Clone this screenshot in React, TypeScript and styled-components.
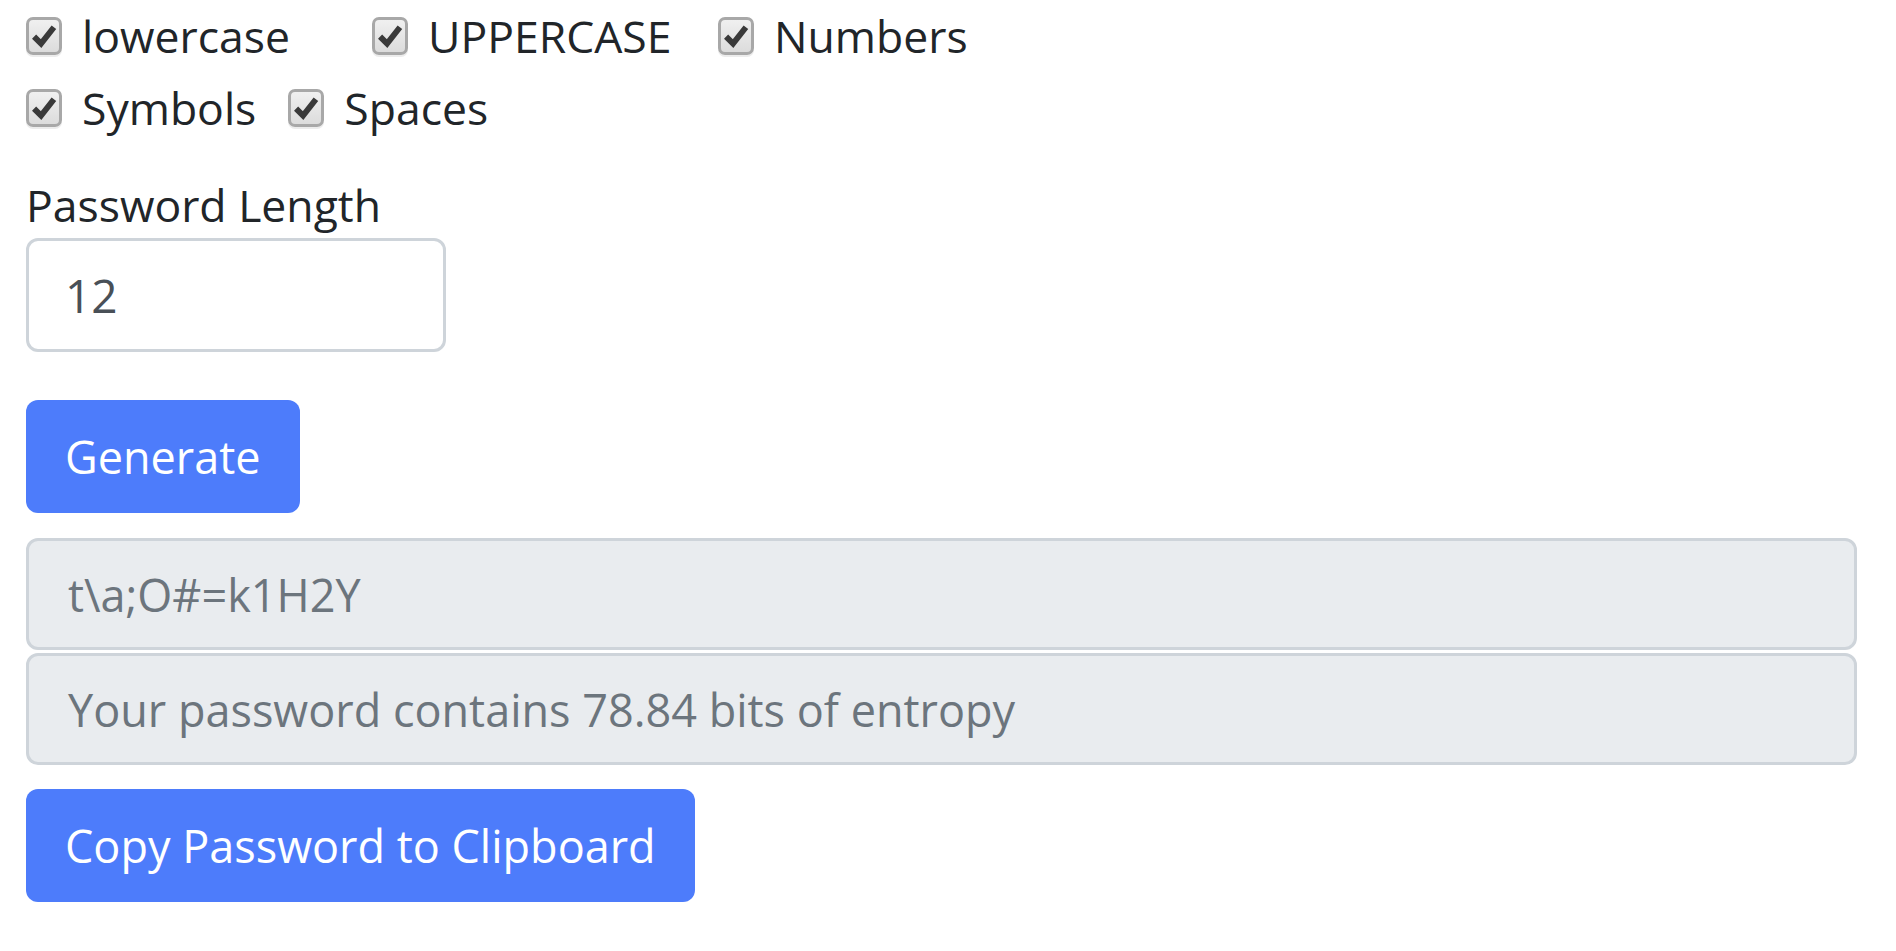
import React, { useState } from 'react';
import styled, { createGlobalStyle } from 'styled-components';

const GlobalStyle = createGlobalStyle`
  body {
    margin: 0;
    background: #ffffff;
    font-family: "Open Sans", "Noto Sans", sans-serif;
    color: #212529;
  }
`

const options = [
  { id: 'lower', label: 'lowercase' },
  { id: 'upper', label: 'UPPERCASE' },
  { id: 'numbers', label: 'Numbers' },
]

const extraOptions = [
  { id: 'symbols', label: 'Symbols' },
  { id: 'spaces', label: 'Spaces' },
]

function Check({ label }: { label: string }) {
  return (
    <CheckItem>
      <Box>
        <svg width="28" height="28" viewBox="0 0 24 24">
          <path d="M3.5 12.5 L9.5 18.5 L20.5 4.5" fill="none" stroke="#3a3a3a" strokeWidth="5" strokeLinejoin="miter" strokeLinecap="butt" />
        </svg>
      </Box>
      <CheckLabel>{label}</CheckLabel>
    </CheckItem>
  )
}

function App() {
  const [length, setLength] = useState('12')

  return (
    <Page>
      <GlobalStyle />
      <GridRow>
        {options.map(o => <Check key={o.id} label={o.label} />)}
      </GridRow>
      <FlexRow>
        {extraOptions.map(o => <Check key={o.id} label={o.label} />)}
      </FlexRow>
      <LengthGroup>
        <Label htmlFor="len">Password Length</Label>
        <NumberInput id="len" value={length} onChange={e => setLength(e.target.value)} />
      </LengthGroup>
      <Button $space={48}>Generate</Button>
      <Outputs>
        <Readonly>{"t\\a;O#=k1H2Y"}</Readonly>
        <Readonly>Your password contains 78.84 bits of entropy</Readonly>
      </Outputs>
      <Button $space={24}>Copy Password to Clipboard</Button>
    </Page>
  )
}

const Page = styled.div`
  padding: 0 39px 0 26px;
  display: flex;
  flex-direction: column;
  align-items: flex-start;
`

const GridRow = styled.div`
  display: grid;
  grid-template-columns: repeat(3, 346px);
`

const FlexRow = styled.div`
  display: flex;
  gap: 32px;
`

const CheckItem = styled.label`
  display: flex;
  align-items: center;
  gap: 20px;
  height: 72px;
`

const Box = styled.span`
  box-sizing: border-box;
  width: 36px;
  height: 38px;
  border: 3px solid #a8a8a8;
  border-radius: 7px;
  background: linear-gradient(#f0f0f0, #dcdcdc);
  display: flex;
  align-items: center;
  justify-content: center;
  box-shadow: 0 2px 0 #ececec;
`

const CheckLabel = styled.span`
  font-size: 44.5px;
  line-height: 72px;
  color: #212529;
`

const LengthGroup = styled.div`
  display: flex;
  flex-direction: column;
  align-items: flex-start;
  margin-top: 28px;
`

const Label = styled.label`
  font-size: 44.5px;
  line-height: 66px;
  color: #212529;
`

const NumberInput = styled.input`
  box-sizing: border-box;
  width: 420px;
  height: 114px;
  padding: 0 36px;
  border: 3px solid #ced4da;
  border-radius: 12px;
  font-family: inherit;
  font-size: 46px;
  color: #495057;
  background: #fff;
  outline: none;
`

const Button = styled.button<{ $space: number }>`
  box-sizing: border-box;
  height: 113px;
  padding: 0 39px;
  margin-top: ${p => p.$space}px;
  border: none;
  border-radius: 12px;
  background: #4d7cfb;
  color: #ffffff;
  font-family: inherit;
  font-size: 45px;
  cursor: pointer;
`

const Outputs = styled.div`
  align-self: stretch;
  display: flex;
  flex-direction: column;
  gap: 3px;
  margin-top: 25px;
`

const Readonly = styled.div`
  box-sizing: border-box;
  height: 112px;
  padding: 0 39px;
  display: flex;
  align-items: center;
  border: 3px solid #ced4da;
  border-radius: 12px;
  background: #e9ecef;
  color: #6c757d;
  font-size: 45px;
`

export default App;
